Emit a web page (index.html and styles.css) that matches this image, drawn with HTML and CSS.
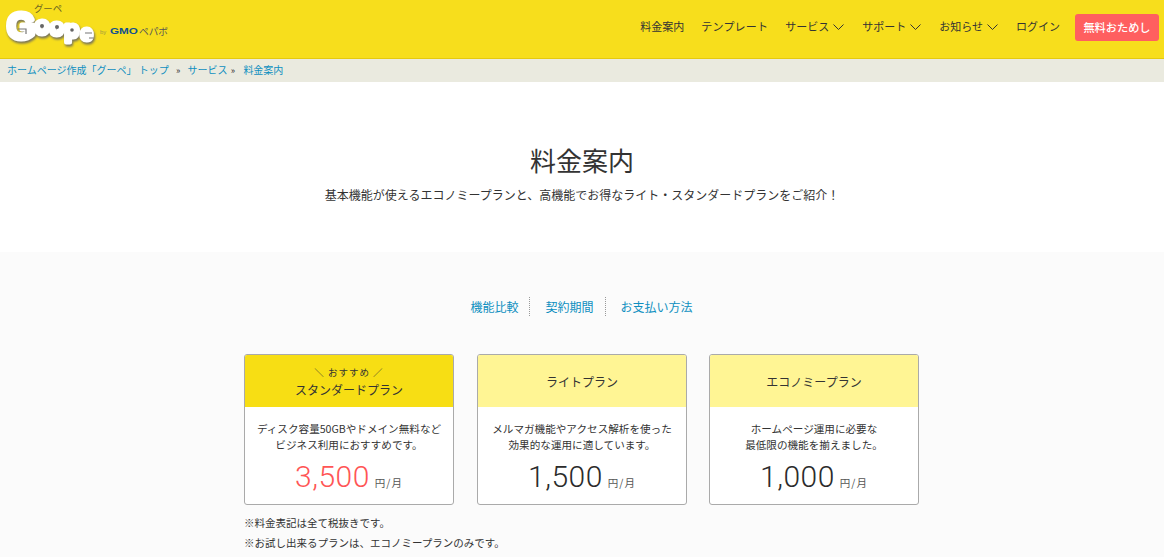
FILE: index.html
```html
<!DOCTYPE html>
<html lang="ja">
<head>
    <meta charset="UTF-8">
    <meta name="viewport" content="width=device-width, initial-scale=1.0">
    <title>料金案内</title>
    <link rel="stylesheet" href="styles.css">
</head>
<body>

    <header class="site-header">
        <a class="logo" href="#">
            <svg width="170" height="50" viewBox="0 0 170 50">
                <text class="logo-kana" x="34" y="12" textLength="28" lengthAdjust="spacingAndGlyphs">グーペ</text>
                <g class="logo-blob">
                    <text class="logo-word" x="7" y="39" font-size="36">G</text>
                    <text class="logo-word" x="35" y="34" font-size="23">o</text>
                    <text class="logo-word" x="50" y="35" font-size="22">o</text>
                    <text class="logo-word" x="65" y="37" font-size="22">p</text>
                    <text class="logo-word" x="81" y="40" font-size="20">e</text>
                </g>
                <path d="M18 29h8v5" fill="none" stroke="#777" stroke-width="1.2"/>
                <circle cx="42" cy="26" r="2" fill="#666"/>
                <circle cx="57" cy="27" r="2" fill="#666"/>
                <circle cx="72" cy="30" r="1.8" fill="#666"/>
                <path d="M85 33h7M89 38h5" fill="none" stroke="#777" stroke-width="1.2"/>
                <text class="logo-by" x="100" y="34">by</text>
                <text class="logo-gmo" x="110" y="34" textLength="28" lengthAdjust="spacingAndGlyphs">GMO</text>
                <text class="logo-pepabo" x="139" y="35" textLength="29" lengthAdjust="spacingAndGlyphs">ペパボ</text>
            </svg>
        </a>
        <nav class="main-nav">
            <a href="#">料金案内</a>
            <a href="#" class="nav-template">テンプレート</a>
            <a href="#" class="has-sub">サービス<svg width="11" height="6" viewBox="0 0 11 6"><path d="M.5.5l5 5 5-5" fill="none" stroke="#333"/></svg></a>
            <a href="#" class="has-sub">サポート<svg width="11" height="6" viewBox="0 0 11 6"><path d="M.5.5l5 5 5-5" fill="none" stroke="#333"/></svg></a>
            <a href="#" class="has-sub">お知らせ<svg width="11" height="6" viewBox="0 0 11 6"><path d="M.5.5l5 5 5-5" fill="none" stroke="#333"/></svg></a>
            <a href="#">ログイン</a>
            <a href="#" class="btn-trial">無料おためし</a>
        </nav>
    </header>

    <div class="breadcrumb">
        <a href="#">ホームページ作成「グーペ」 トップ</a>
        <span class="sep">»</span>
        <a href="#">サービス</a>
        <span class="sep sep-tight">»</span>
        <a href="#">料金案内</a>
    </div>

    <section class="page-title">
        <h1>料金案内</h1>
        <p>基本機能が使えるエコノミープランと、高機能でお得なライト・スタンダードプランをご紹介！</p>
    </section>

    <main class="plans">
        <ul class="anchor-nav">
            <li><a href="#">機能比較</a></li>
            <li><a href="#">契約期間</a></li>
            <li><a href="#">お支払い方法</a></li>
        </ul>

        <div class="plan-list">
            <div class="plan-card">
                <div class="plan-head recommend">
                    <span class="plan-badge">＼ おすすめ ／</span>
                    <span>スタンダードプラン</span>
                </div>
                <div class="plan-body">
                    <p>ディスク容量50GBやドメイン無料など<br>ビジネス利用におすすめです。</p>
                    <div class="price"><strong class="hot">3,500</strong><span>円/月</span></div>
                </div>
            </div>
            <div class="plan-card">
                <div class="plan-head">
                    <span>ライトプラン</span>
                </div>
                <div class="plan-body">
                    <p>メルマガ機能やアクセス解析を使った<br>効果的な運用に適しています。</p>
                    <div class="price"><strong>1,500</strong><span>円/月</span></div>
                </div>
            </div>
            <div class="plan-card">
                <div class="plan-head">
                    <span>エコノミープラン</span>
                </div>
                <div class="plan-body">
                    <p>ホームページ運用に必要な<br>最低限の機能を揃えました。</p>
                    <div class="price"><strong>1,000</strong><span>円/月</span></div>
                </div>
            </div>
        </div>

        <div class="notes">
            <p>※料金表記は全て税抜きです。</p>
            <p>※お試し出来るプランは、エコノミープランのみです。</p>
        </div>
    </main>

</body>
</html>
```

FILE: styles.css
```css
html, body {
    height: 557px;
    overflow: hidden;
}

body {
    font-family: 'Noto Sans CJK JP', 'Noto Sans', sans-serif;
    font-size: 12px;
    color: #333;
    background-color: #fff;
    margin: 0;
    padding: 0;
}

a {
    text-decoration: none;
}

/* header */
.site-header {
    display: flex;
    justify-content: space-between;
    align-items: center;
    height: 58px;
    padding: 0 5px 0 0;
    background-color: #f7de1c;
    border-bottom: 1px solid #e5c90f;
}

.logo {
    display: flex;
    align-items: flex-start;
    height: 58px;
}

.logo-blob {
    filter: drop-shadow(1px 2px 1px #77735a);
}

.logo-word {
    font-family: 'Liberation Sans', sans-serif;
    font-weight: bold;
    fill: #fff;
    stroke: #fff;
    stroke-width: 5;
    stroke-linejoin: round;
}

.logo-kana {
    font-size: 9.5px;
    fill: #6b6420;
}

.logo-by {
    font-family: 'Liberation Sans', sans-serif;
    font-size: 6px;
    fill: #a09a40;
}

.logo-gmo {
    font-family: 'Liberation Sans', sans-serif;
    font-size: 8.5px;
    font-weight: bold;
    fill: #14528f;
}

.logo-pepabo {
    font-size: 9px;
    fill: #555;
}

.main-nav {
    display: flex;
    align-items: center;
    gap: 17px;
    padding-bottom: 3px;
}

.main-nav a {
    margin-bottom: 4px;
    color: #333;
    font-size: 11px;
    white-space: nowrap;
}

.main-nav .nav-template {
    letter-spacing: 0.2px;
}

.main-nav .has-sub {
    margin-right: 1px;
}

.main-nav .has-sub svg {
    margin-left: 4px;
    vertical-align: 1px;
}

.main-nav .btn-trial {
    width: 84px;
    height: 27px;
    line-height: 27px;
    margin: 0 0 0 -2px;
    text-align: center;
    color: #fff;
    background-color: #ff5f5f;
    border-radius: 3px;
    font-size: 11.2px;
    font-weight: 500;
}

/* breadcrumb */
.breadcrumb {
    height: 23px;
    line-height: 22px;
    padding-left: 7px;
    background-color: #eaeadf;
    font-size: 10px;
    white-space: nowrap;
}

.breadcrumb a {
    color: #0e8fc0;
}

.breadcrumb .sep {
    margin: 0 5px;
    color: #333;
    font-size: 9px;
}

.breadcrumb .sep-tight {
    margin: 0 6px 0 1px;
}

/* title */
.page-title {
    height: 170px;
    box-sizing: border-box;
    padding-top: 60px;
    text-align: center;
}

.page-title h1 {
    margin: 0;
    font-size: 26px;
    font-weight: 400;
    line-height: 36px;
    color: #333;
}

.page-title p {
    margin: 7px 0 0;
    font-size: 12px;
    line-height: 20px;
}

/* plans */
.plans {
    height: 305px;
    box-sizing: border-box;
    padding-top: 45px;
    background-color: #fbfbfb;
}

.anchor-nav {
    display: flex;
    justify-content: center;
    margin: 0 5px 0 0;
    padding: 0;
    list-style: none;
}

.anchor-nav li {
    padding: 0 11px 0 15px;
    line-height: 19px;
    border-left: 1px dotted #999;
}

.anchor-nav li:first-child {
    border-left: none;
}

.anchor-nav a {
    color: #0e8fc0;
    font-size: 12px;
}

.plan-list {
    display: flex;
    gap: 23px;
    width: 676px;
    margin: 38px auto 0;
}

.plan-card {
    width: 210px;
    height: 151px;
    box-sizing: border-box;
    background-color: #fff;
    border: 1px solid #aaa;
    border-radius: 3px;
    overflow: hidden;
}

.plan-card:last-child {
    margin-left: -1px;
}

.plan-head {
    display: flex;
    flex-direction: column;
    align-items: center;
    justify-content: center;
    height: 52px;
    background-color: #fff594;
    font-size: 12px;
    color: #333;
}

.plan-head.recommend {
    background-color: #f7de14;
    line-height: 18px;
}

.plan-badge {
    font-size: 9.5px;
    letter-spacing: 1px;
}

.plan-body {
    padding-top: 14px;
    text-align: center;
}

.plan-body p {
    margin: 0;
    font-size: 10.6px;
    line-height: 16px;
}

.price {
    margin-top: 6px;
    line-height: 36px;
}

.price strong {
    font-family: 'Roboto', sans-serif;
    font-size: 30px;
    font-weight: 300;
    letter-spacing: 0.5px;
    color: #2b2b2b;
}

.price strong.hot {
    color: #ff5555;
}

.price span {
    margin-left: 5px;
    font-size: 10.5px;
    letter-spacing: 1px;
    color: #555;
}

.notes {
    width: 676px;
    margin: 10px auto 0;
    font-size: 10.5px;
}

.notes p {
    margin: 0 0 4px;
    line-height: 16px;
}
```
